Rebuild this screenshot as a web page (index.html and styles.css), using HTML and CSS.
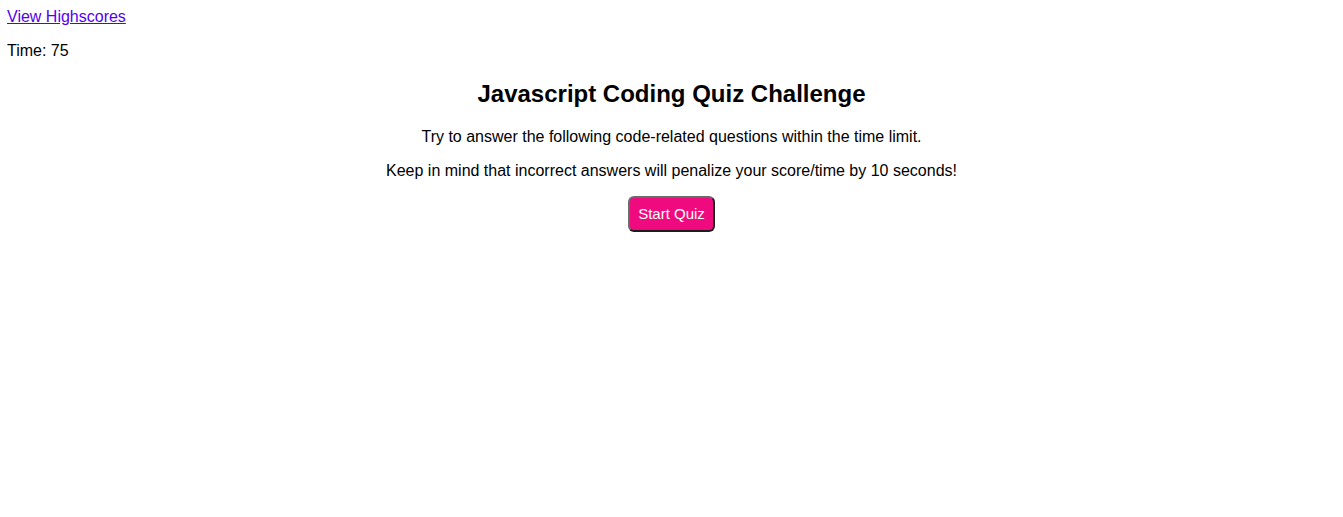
FILE: index.html
```html
<!DOCTYPE html>
<html>
<head>
<meta charset="utf-8">
<title>Quiz</title>
<link rel="stylesheet" href="styles.css">
</head>
<body>
<header class="top">
<a class="scores" href="#">View Highscores</a>
<p class="timer">Time: 75</p>
</header>
<main class="intro">
<h2 class="title">Javascript Coding Quiz Challenge</h2>
<p>Try to answer the following code-related questions within the time limit.</p>
<p>Keep in mind that incorrect answers will penalize your score/time by 10 seconds!</p>
<button class="start">Start Quiz</button>
</main>
</body>
</html>
```
FILE: styles.css
```css
body {
  margin: 8px 7px;
  font-family: "Liberation Sans", Arial, sans-serif;
  font-size: 16px;
  color: #000;
  background: #fff;
}
.scores {
  color: #5200ee;
  text-decoration: underline;
}
.timer {
  margin: 16px 0;
}
.intro {
  text-align: center;
}
.title {
  font-size: 24px;
  margin: 19.92px 0;
}
.intro p {
  margin: 16px 0;
}
.start {
  font-family: "Liberation Sans", Arial, sans-serif;
  font-size: 15px;
  line-height: 17px;
  color: #fff;
  background: #ef0a80;
  padding: 7.5px 8px;
  border: 2px solid;
  border-color: #6b6b6b #1c1c1c #1c1c1c #6b6b6b;
  border-radius: 6px;
}
```
